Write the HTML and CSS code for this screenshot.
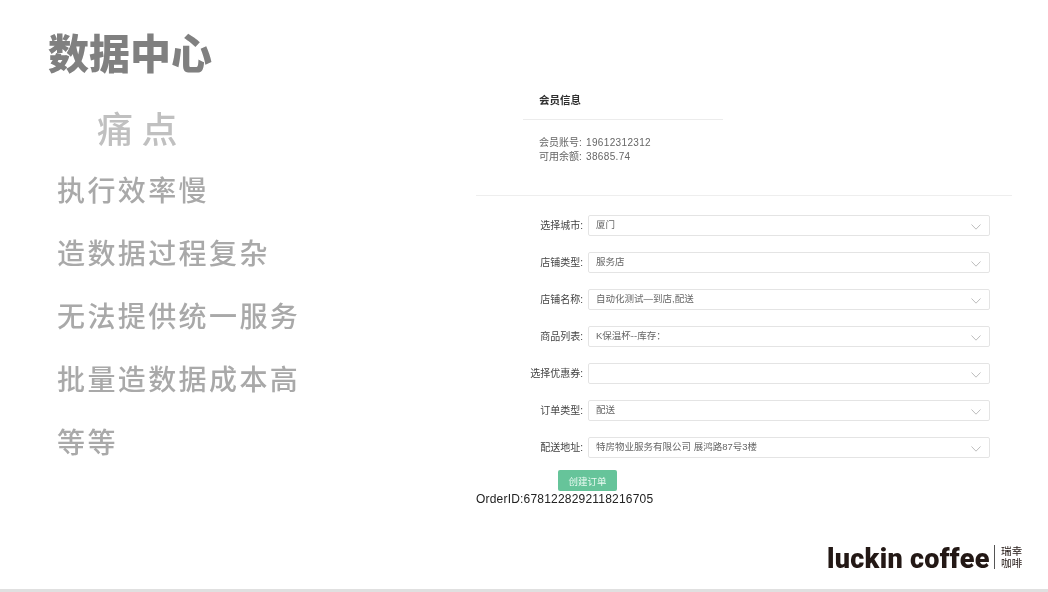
FILE: index.html
```html
<!DOCTYPE html>
<html lang="zh-CN">
<head>
<meta charset="utf-8">
<title>数据中心</title>
<link rel="stylesheet" href="styles.css">
</head>
<body>
<div class="slide">
  <div class="main">
    <section class="left">
      <h1 class="title">数据中心</h1>
      <h2 class="subtitle">痛点</h2>
      <ul class="pains">
        <li>执行效率慢</li>
        <li>造数据过程复杂</li>
        <li>无法提供统一服务</li>
        <li>批量造数据成本高</li>
        <li>等等</li>
      </ul>
    </section>
    <section class="right">
      <div class="member">
        <div class="member-head">会员信息</div>
        <div class="member-body">
          <div><span class="key">会员账号:</span>19612312312</div>
          <div><span class="key">可用余额:</span>38685.74</div>
        </div>
      </div>
      <form class="order-form">
        <div class="row"><span class="label">选择城市:</span><div class="select"><span class="value">厦门</span><svg class="chev" viewBox="0 0 10 6"><path d="M.5.5 5 5.2 9.5.5"/></svg></div></div>
        <div class="row"><span class="label">店铺类型:</span><div class="select"><span class="value">服务店</span><svg class="chev" viewBox="0 0 10 6"><path d="M.5.5 5 5.2 9.5.5"/></svg></div></div>
        <div class="row"><span class="label">店铺名称:</span><div class="select"><span class="value">自动化测试—到店,配送</span><svg class="chev" viewBox="0 0 10 6"><path d="M.5.5 5 5.2 9.5.5"/></svg></div></div>
        <div class="row"><span class="label">商品列表:</span><div class="select"><span class="value">K保温杯--库存：</span><svg class="chev" viewBox="0 0 10 6"><path d="M.5.5 5 5.2 9.5.5"/></svg></div></div>
        <div class="row"><span class="label">选择优惠券:</span><div class="select"><span class="value"></span><svg class="chev" viewBox="0 0 10 6"><path d="M.5.5 5 5.2 9.5.5"/></svg></div></div>
        <div class="row"><span class="label">订单类型:</span><div class="select"><span class="value">配送</span><svg class="chev" viewBox="0 0 10 6"><path d="M.5.5 5 5.2 9.5.5"/></svg></div></div>
        <div class="row"><span class="label">配送地址:</span><div class="select"><span class="value">特房物业服务有限公司 展鸿路87号3楼</span><svg class="chev" viewBox="0 0 10 6"><path d="M.5.5 5 5.2 9.5.5"/></svg></div></div>
        <button class="submit" type="button">创建订单</button>
      </form>
      <div class="order-id">OrderID:6781228292118216705</div>
    </section>
  </div>
  <footer class="brand">
    <span class="brand-name">luckin coffee</span>
    <div class="brand-cn"><div>瑞幸</div><div>咖啡</div></div>
  </footer>
  <div class="bottom-bar"></div>
</div>
</body>
</html>
```
FILE: styles.css
```css
* { box-sizing: border-box; }
html, body { margin: 0; padding: 0; background: #fff; }
.slide {
  width: 1048px;
  height: 592px;
  overflow: hidden;
  display: flex;
  flex-direction: column;
  font-family: "Liberation Sans", "Noto Sans CJK SC", sans-serif;
  filter: blur(0.35px);
}
.main { display: flex; height: 537px; }

.left { width: 476px; padding: 26px 0 0 48px; }
.title {
  margin: 0;
  font-size: 41px;
  line-height: 50px;
  font-weight: 900;
  color: #808080;
  font-family: "Noto Sans CJK SC", sans-serif;
}
.subtitle {
  margin: 28px 0 0 49px;
  font-size: 36px;
  line-height: 46px;
  font-weight: 500;
  letter-spacing: 8.5px;
  color: #c0c0c0;
  font-family: "Noto Sans CJK SC", sans-serif;
}
.pains {
  list-style: none;
  margin: 21px 0 0 9px;
  padding: 0;
  font-size: 28px;
  letter-spacing: 2.4px;
  font-weight: 500;
  color: #a9a9a9;
  font-family: "Noto Sans CJK SC", sans-serif;
}
.pains li { height: 63px; line-height: 36px; }

.right { width: 536px; padding-top: 92px; }
.member { width: 247px; }
.member-head {
  width: 200px;
  margin-left: 47px;
  height: 28px;
  line-height: 17px;
  font-size: 10.5px;
  font-weight: 700;
  color: #2f2f2f;
  padding-left: 16px;
  border-bottom: 1px solid #ececec;
}
.member-body {
  margin-left: 63px;
  padding-top: 16px;
  font-size: 10px;
  line-height: 14px;
  letter-spacing: .35px;
  color: #666;
  white-space: nowrap;
}
.key { display: inline-block; width: 47px; letter-spacing: 0; }
.order-form {
  margin-top: 31px;
  border-top: 1px solid #eee;
  padding-top: 19px;
}
.row { display: flex; align-items: center; height: 21px; margin-bottom: 16px; }
.label {
  width: 107px;
  text-align: right;
  font-size: 10px;
  line-height: 14px;
  color: #444;
  white-space: nowrap;
  margin-right: 5px;
}
.select {
  width: 402px;
  height: 21px;
  border: 1px solid #e4e4e4;
  border-radius: 2px;
  display: flex;
  align-items: center;
  justify-content: space-between;
  padding: 0 8px 0 7px;
  font-size: 9.5px;
  color: #666;
}
.value { line-height: 14px; margin-bottom: 1px; }
.chev { width: 10px; height: 6px; margin-top: 2px; fill: none; stroke: #b5b5b5; stroke-width: .9; }
.submit {
  display: block;
  margin: -4px 0 0 82px;
  width: 59px;
  height: 21px;
  padding: 0;
  border: 0;
  border-radius: 2px;
  background: #66c49a;
  color: #eafaf2;
  font-family: inherit;
  font-size: 9.5px;
}
.order-id { font-size: 12px; line-height: 15px; letter-spacing: .2px; color: #222; white-space: nowrap; margin-top: 1px; }

.brand {
  display: flex;
  align-items: center;
  height: 52px;
  padding-left: 827px;
  padding-bottom: 12px;
}
.brand-name {
  font-family: "Roboto", sans-serif;
  font-weight: 900;
  font-size: 27px;
  letter-spacing: .3px;
  margin-top: 3px;
  color: #231815;
  line-height: 30px;
  width: 167px;
  white-space: nowrap;
}
.brand-cn {
  border-left: 1px solid #555;
  padding-left: 6px;
  font-size: 10.5px;
  letter-spacing: .2px;
  color: #231815;
}
.brand-cn div { line-height: 12px; }
.bottom-bar { height: 3px; background: #e0e0e0; }
```
